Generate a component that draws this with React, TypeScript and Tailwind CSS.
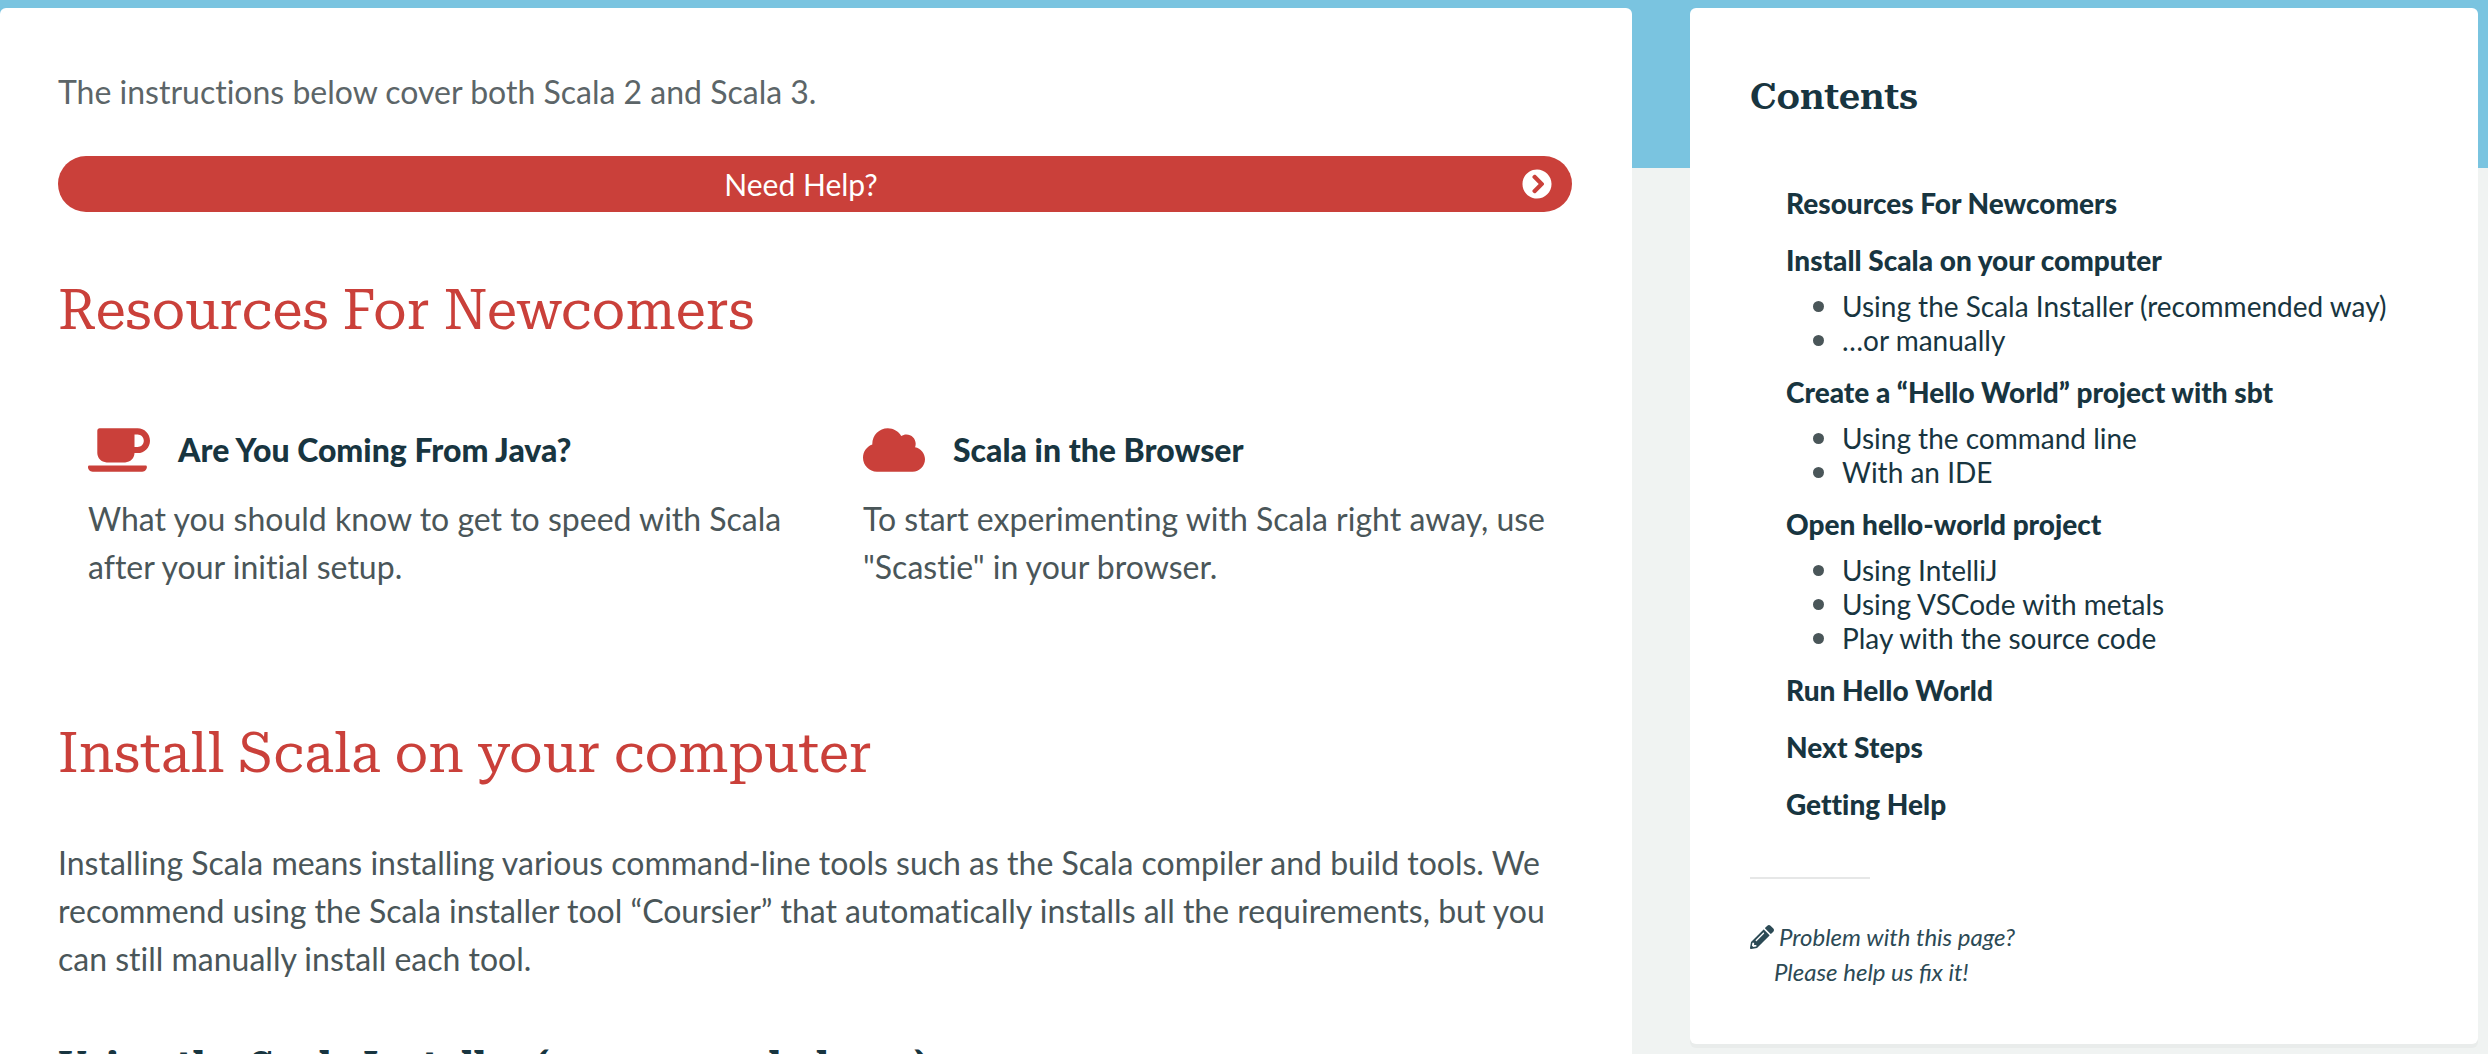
import { FaCoffee, FaCloud, FaPencilAlt, FaChevronCircleRight } from "react-icons/fa";

type Section = { title: string; items?: string[] };

const sections: Section[] = [
  { title: "Resources For Newcomers" },
  { title: "Install Scala on your computer", items: ["Using the Scala Installer (recommended way)", "…or manually"] },
  { title: "Create a “Hello World” project with sbt", items: ["Using the command line", "With an IDE"] },
  { title: "Open hello-world project", items: ["Using IntelliJ", "Using VSCode with metals", "Play with the source code"] },
  { title: "Run Hello World" },
  { title: "Next Steps" },
  { title: "Getting Help" },
];

const resources = [
  { icon: FaCoffee, title: "Are You Coming From Java?", text: "What you should know to get to speed with Scala after your initial setup." },
  { icon: FaCloud, title: "Scala in the Browser", text: "To start experimenting with Scala right away, use \"Scastie\" in your browser." },
];

const slug = (title: string) => "#" + title.toLowerCase().replace(/[^a-z]+/g, "-");

export default function App() {
  return (
    <div className="h-screen overflow-hidden bg-[linear-gradient(#7ac4e0_168px,#f0f3f2_168px)] pt-2 pr-[10px] font-['Lato',sans-serif] text-[#4a5659] [font-variant-ligatures:none]">
      <div className="flex items-start gap-[58px]">
        <main className="min-w-0 flex-1 rounded-md bg-white pt-[60px] pr-[60px] pb-20 pl-[58px] text-[32px] leading-12 shadow-[0_4px_0_#e9eceb]">
          <p className="text-[#5c6568]">The instructions below cover both Scala 2 and Scala 3.</p>
          <button className="relative mt-10 flex h-14 w-full items-center justify-center rounded-full bg-[#ca403a] pr-[28px] text-[30px] text-white">
            Need Help?
            <FaChevronCircleRight className="absolute right-5 size-[30px]" />
          </button>
          <h2 className="mt-16 font-['Roboto_Slab','Roboto_Serif',serif] text-[55px] leading-[68px] text-[#ca403a]">Resources For Newcomers</h2>
          <div className="mt-[75px] grid grid-cols-2 gap-9">
            {resources.map(({ icon: Icon, title, text }) => (
              <section key={title} className="pl-[30px]">
                <h3 className="flex items-center gap-7 font-black text-[#183540]">
                  <Icon className="size-[62px] text-[#ca403a]" />
                  <a href={slug(title)}>{title}</a>
                </h3>
                <p className="mt-[14px]">{text}</p>
              </section>
            ))}
          </div>
          <h2 className="mt-32 font-['Roboto_Slab','Roboto_Serif',serif] text-[55px] leading-[68px] text-[#ca403a]">Install Scala on your computer</h2>
          <p className="mt-[52px]">
            Installing Scala means installing various command-line tools such as the Scala compiler and build tools. We
            recommend using the Scala installer tool “Coursier” that automatically installs all the requirements, but you
            can still manually install each tool.
          </p>
          <h3 className="mt-[58px] font-['Roboto_Slab','Roboto_Serif',serif] text-[38px] font-bold text-[#183540]">Using the Scala Installer (recommended way)</h3>
        </main>
        <aside className="w-[788px] shrink-0 rounded-md bg-white px-[60px] pt-[65px] pb-[55px] text-[28px] leading-[34px] text-[#183540] shadow-[0_4px_0_#e9eceb]">
          <h2 className="font-['Roboto_Slab','Roboto_Serif',serif] text-[37px] leading-12 font-semibold">Contents</h2>
          <ul className="mt-[65px] pl-9">
            {sections.map(({ title, items }) => (
              <li key={title} className={items ? "pb-[18px]" : "pb-[23px]"}>
                <a href={slug(title)} className="font-black">{title}</a>
                {items && (
                  <ul className="mt-3 pl-[27px]">
                    {items.map((item) => (
                      <li key={item} className="flex items-center gap-[18px]">
                        <span className="size-[11px] rounded-full bg-[#4a5659]" />
                        <a href={slug(item)}>{item}</a>
                      </li>
                    ))}
                  </ul>
                )}
              </li>
            ))}
          </ul>
          <hr className="mt-[33px] w-[120px] border-t-2 border-[#e6e7e7]" />
          <a href="#edit" className="mt-10 block text-[24px] leading-[35px] text-[#2c4a55] italic [font-variant-ligatures:normal]">
            <span className="flex items-center gap-[5px]">
              <FaPencilAlt className="size-6" />
              Problem with this page?
            </span>
            <span className="block pl-6">Please help us fix it!</span>
          </a>
        </aside>
      </div>
    </div>
  );
}
